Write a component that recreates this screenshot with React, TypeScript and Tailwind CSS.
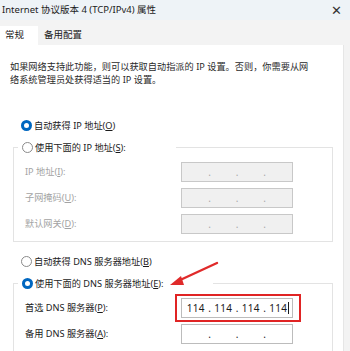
import React from "react";

const font = {
  fontFamily: '"Noto Sans", "Noto Sans CJK SC", sans-serif',
};

function Radio({ checked }: { checked?: boolean }) {
  return checked ? (
    <span className="inline-flex w-[11px] h-[11px] rounded-full bg-[#0067c0] items-center justify-center shrink-0">
      <span className="w-[5px] h-[5px] rounded-full bg-white" />
    </span>
  ) : (
    <span className="inline-block w-[11px] h-[11px] rounded-full border border-[#8a8a8a] bg-white shrink-0" />
  );
}

function IpBox({
  values,
  disabled,
  caret,
}: {
  values?: string[];
  disabled?: boolean;
  caret?: boolean;
}) {
  const v = values ?? ["", "", "", ""];
  return (
    <div
      className={`flex items-center w-[112px] h-[20px] border text-[10px] ${
        disabled
          ? "bg-[#f0f0f0] border-[#c8c8c8] text-[#a8a8a8]"
          : "bg-white border-[#bcbcbc] text-[#1b1b1b]"
      }`}
    >
      {v.map((x, i) => (
        <React.Fragment key={i}>
          <span className="relative flex-1 text-center leading-none tracking-[0.3px]">
            {x}
            {caret && i === 3 && (
              <span className="absolute right-[3px] top-[-1px] w-[1px] h-[12px] bg-[#1b1b1b]" />
            )}
          </span>
          {i < 3 && <span className="w-[4px] -mx-[2px] text-center leading-none">.</span>}
        </React.Fragment>
      ))}
    </div>
  );
}

function Row({
  label,
  children,
}: {
  label: React.ReactNode;
  children: React.ReactNode;
}) {
  return (
    <div className="flex items-center justify-between pl-[11px] pr-[39px]">
      <span>{label}</span>
      {children}
    </div>
  );
}

export default function App() {
  return (
    <div
      className="relative w-[350px] h-[351px] overflow-hidden bg-[#f3f3f3] text-[9.2px] text-[#1b1b1b]"
      style={font}
    >
      {/* Title bar */}
      <div className="h-[20px] bg-[#eef3f7] flex items-center justify-between pl-[2px] pr-[8px]">
        <span className="text-[9.5px]">Internet 协议版本 4 (TCP/IPv4) 属性</span>
        <span className="text-[13px] text-[#333] leading-none">✕</span>
      </div>

      {/* Tabs */}
      <div className="h-[25px] flex items-end">
        <div className="h-[19px] w-[38px] bg-white flex items-center pl-[5px] text-[9.5px]">
          常规
        </div>
        <div className="h-[19px] flex items-center pl-[6px] text-[9.5px]">
          备用配置
        </div>
      </div>

      {/* Panel */}
      <div className="bg-white mr-[6px] border-r border-[#e6e6e6] h-[306px] pt-[15px]">
        <p className="px-[10px] leading-[13px] text-[#2a2a2a]">
          如果网络支持此功能，则可以获取自动指派的 IP 设置。否则，你需要从网
          <br />
          络系统管理员处获得适当的 IP 设置。
        </p>

        <div className="mt-[33px] pl-[21px] flex items-center gap-[2px] h-[13px]">
          <Radio checked />
          <span>
            自动获得 IP 地址(<u>O</u>)
          </span>
        </div>

        <fieldset className="mt-[9px] ml-[13px] mr-[10px] border border-[#e3e3e3] pb-[7px]">
          <legend className="ml-[4px] w-[158px] bg-white">
            <span className="flex items-center gap-[2px] pl-[4px] h-[13px]">
              <Radio />
              <span>
                使用下面的 IP 地址(<u>S</u>):
              </span>
            </span>
          </legend>
          <div className="flex flex-col gap-[6px] text-[#a3a3a3] mt-[8px]">
            <Row label={<>IP 地址(<u>I</u>):</>}>
              <IpBox disabled />
            </Row>
            <Row label={<>子网掩码(<u>U</u>):</>}>
              <IpBox disabled />
            </Row>
            <Row label={<>默认网关(<u>D</u>):</>}>
              <IpBox disabled />
            </Row>
          </div>
        </fieldset>

        <div className="mt-[13px] pl-[21px] flex items-center gap-[2px] h-[13px]">
          <Radio />
          <span>
            自动获得 DNS 服务器地址(<u>B</u>)
          </span>
        </div>

        <fieldset className="mt-[9px] ml-[13px] mr-[10px] border border-[#e3e3e3] pb-[10px]">
          <legend className="ml-[4px] w-[195px] bg-white">
            <span className="flex items-center gap-[2px] pl-[4px] h-[13px]">
              <Radio checked />
              <span>
                使用下面的 DNS 服务器地址(<u>E</u>):
              </span>
            </span>
          </legend>
          <div className="flex flex-col gap-[6px] mt-[8px]">
            <Row label={<>首选 DNS 服务器(<u>P</u>):</>}>
              <div className="-ml-[6px] -mr-[8px] -my-[4px] border-[2px] border-[#e02424] pt-[2px] pb-[2px] pl-[4px] pr-[6px]">
                <IpBox values={["114", "114", "114", "114"]} caret />
              </div>
            </Row>
            <Row label={<>备用 DNS 服务器(<u>A</u>):</>}>
              <IpBox />
            </Row>
          </div>
        </fieldset>
      </div>

      {/* Annotation arrow */}
      <svg
        className="absolute left-0 top-0 pointer-events-none"
        width="350"
        height="351"
      >
        <line
          x1="217"
          y1="263"
          x2="178"
          y2="281"
          stroke="#e02a2a"
          strokeWidth="2.4"
          strokeLinecap="round"
        />
        <polygon points="170,285 181,276 184,285" fill="#e02a2a" />
      </svg>
    </div>
  );
}
